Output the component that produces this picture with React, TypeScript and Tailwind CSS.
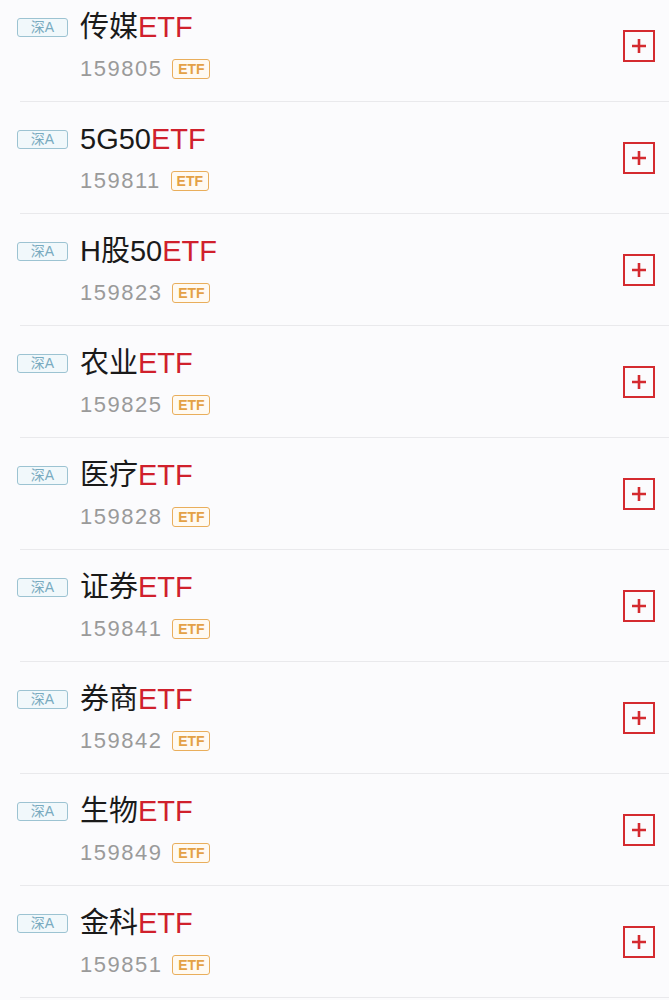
const FUNDS = [
  { name: "传媒", code: "159805" },
  { name: "5G50", code: "159811" },
  { name: "H股50", code: "159823" },
  { name: "农业", code: "159825" },
  { name: "医疗", code: "159828" },
  { name: "证券", code: "159841" },
  { name: "券商", code: "159842" },
  { name: "生物", code: "159849" },
  { name: "金科", code: "159851" },
];

const font = { fontFamily: '"Liberation Sans", "Noto Sans CJK SC", sans-serif' };

function FundRow({ name, code }: { name: string; code: string }) {
  return (
    <div>
      <div className="h-[111px] flex items-center pl-[17px] pr-[14px]">
        <div className="flex-1 flex flex-col">
          <div className="flex items-center h-[32px]">
            <span className="w-[51px] h-[19px] flex items-center justify-center rounded-[3px] border border-[#9cc3d2] bg-[#f1f8fb] text-[#79abc0] text-[14px] leading-none">
              深A
            </span>
            <span className="ml-[12px] text-[29px] leading-none text-[#1a1a1a]">
              {name}
              <span className="text-[#d0202c]">ETF</span>
            </span>
          </div>
          <div className="flex items-center h-[22px] mt-[15px] pl-[63px]">
            <span className="text-[22px] tracking-[1.5px] leading-none text-[#9a9a9a]">{code}</span>
            <span className="ml-[10px] w-[38px] h-[20px] flex items-center justify-center rounded-[3px] border border-[#e9ae5c] text-[#e4a145] text-[14px] font-bold leading-none bg-[#fffaf2]">
              ETF
            </span>
          </div>
        </div>
        <div className="w-[32px] h-[32px] border-2 border-[#d42a2f] flex items-center justify-center">
          <svg width="16" height="16" viewBox="0 0 16 16">
            <path d="M8 1v14M1 8h14" stroke="#d42a2f" strokeWidth="2.6" />
          </svg>
        </div>
      </div>
      <div className="ml-[20px] h-px bg-[#e9e9ec]" />
    </div>
  );
}

export default function App() {
  return (
    <div className="w-[669px] h-[1000px] overflow-hidden bg-[#fbfbfd]" style={font}>
      <div className="-mt-[10px]">
        {FUNDS.map((f) => (
          <FundRow key={f.code} name={f.name} code={f.code} />
        ))}
      </div>
    </div>
  );
}
